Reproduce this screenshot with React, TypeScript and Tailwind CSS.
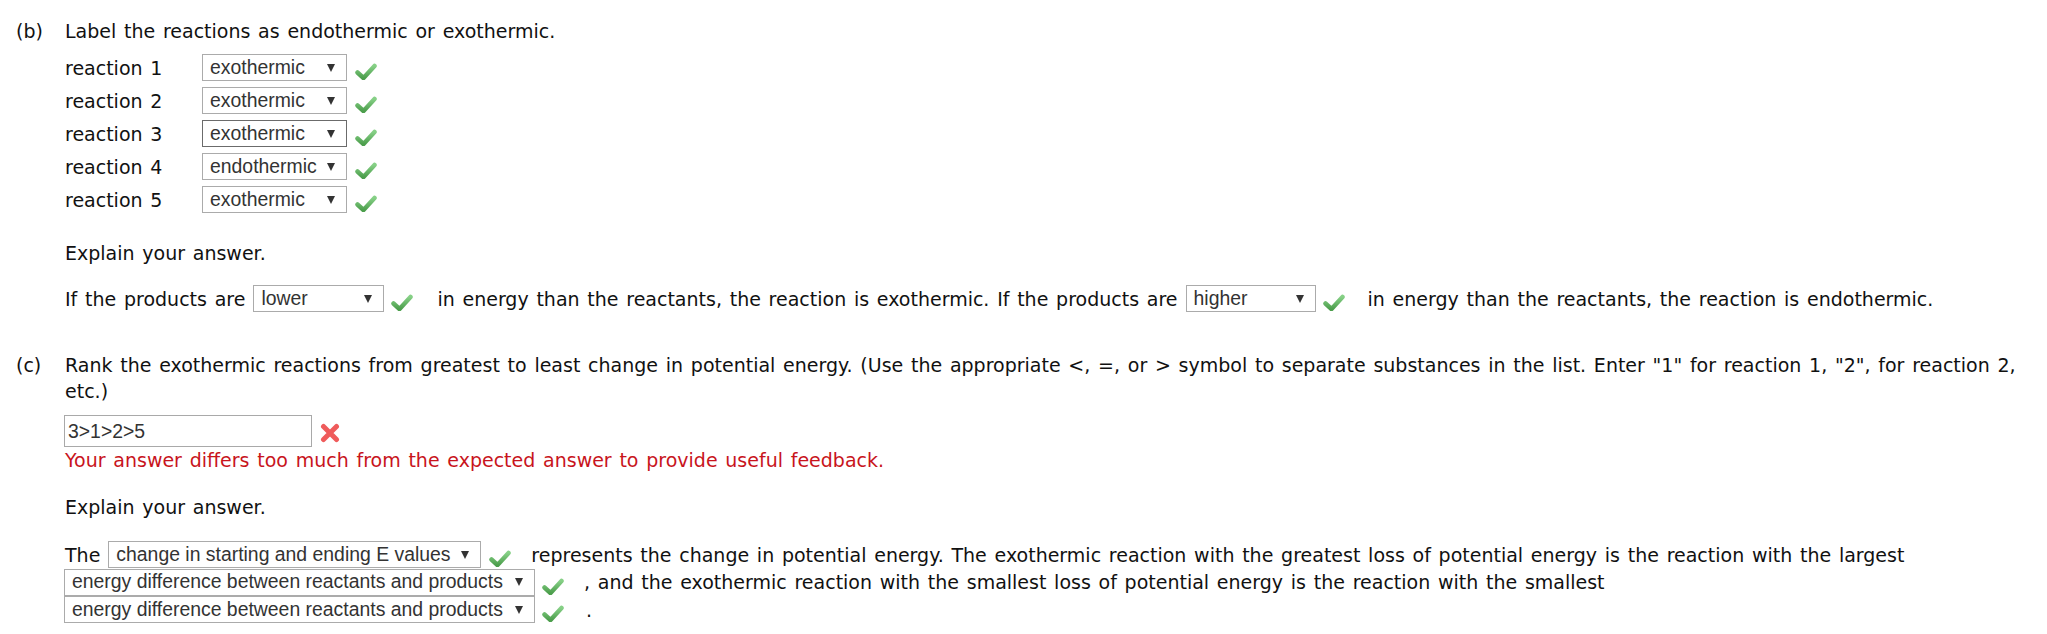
import React from 'react';

const font = "font-['DejaVu_Sans',Verdana,sans-serif]";

function Check() {
  return (
    <svg width="22" height="17" viewBox="0 0 22 17" className="shrink-0 mt-[8px]">
      <defs>
        <linearGradient id="chk" x1="0" y1="0" x2="0" y2="1">
          <stop offset="0" stopColor="#86d086" />
          <stop offset="1" stopColor="#4c9e4c" />
        </linearGradient>
      </defs>
      <path
        d="M2.5 9.5 L8.5 15 L19.5 3"
        fill="none"
        stroke="url(#chk)"
        strokeWidth="4.5"
        strokeLinecap="round"
        strokeLinejoin="round"
      />
    </svg>
  );
}

function Cross() {
  return (
    <svg width="20" height="20" viewBox="0 0 20 20" className="shrink-0 mt-[3px]">
      <path
        d="M3.5 3.5 L16.5 16.5 M16.5 3.5 L3.5 16.5"
        fill="none"
        stroke="#ef5b5b"
        strokeWidth="5"
        strokeLinecap="round"
      />
    </svg>
  );
}

function Select({ value, width, dark }: { value: string; width: number; dark?: boolean }) {
  return (
    <div
      className={`flex items-center justify-between shrink-0 h-[27px] pl-[7px] pr-[11px] bg-white border ${dark ? 'border-[#6b6b6b]' : 'border-[#ababab]'} font-['Liberation_Sans',Arial,sans-serif] text-[19.4px] text-[#333] leading-none [word-spacing:normal]`}
      style={{ width }}
    >
      <span className="whitespace-nowrap">{value}</span>
      <svg width="8" height="8" viewBox="0 0 8 8" className="shrink-0">
        <path d="M0 0 H8 L4 8 Z" fill="#333" />
      </svg>
    </div>
  );
}

const rows = [
  ['reaction 1', 'exothermic', false],
  ['reaction 2', 'exothermic', false],
  ['reaction 3', 'exothermic', true],
  ['reaction 4', 'endothermic', false],
  ['reaction 5', 'exothermic', false],
] as const;

export default function App() {
  return (
    <div className={`${font} text-[19px] leading-[26px] text-[#111] [word-spacing:1.7px] bg-white min-h-[634px] w-[2047px] px-[16px] pt-[18px]`}>
      {/* part (b) */}
      <div className="flex">
        <div className="w-[49px] shrink-0">(b)</div>
        <div className="flex flex-col">
          <div>Label the reactions as endothermic or exothermic.</div>

          <div className="flex flex-col gap-[6px] mt-[10px]">
            {rows.map(([label, value, dark]) => (
              <div key={label} className="flex items-center h-[27px]">
                <div className="w-[137px] shrink-0">{label}</div>
                <Select value={value} width={145} dark={dark} />
                <div className="ml-[8px]">
                  <Check />
                </div>
              </div>
            ))}
          </div>

          <div className="mt-[27px]">Explain your answer.</div>

          <div className="flex items-center h-[27px] mt-[19px] whitespace-nowrap">
            <span>If the products are</span>
            <div className="ml-[8px]">
              <Select value="lower" width={131} />
            </div>
            <div className="ml-[7px]">
              <Check />
            </div>
            <span className="ml-[24px]">in energy than the reactants, the reaction is exothermic. If the products are</span>
            <div className="ml-[8px]">
              <Select value="higher" width={130} />
            </div>
            <div className="ml-[7px]">
              <Check />
            </div>
            <span className="ml-[23px]">in energy than the reactants, the reaction is endothermic.</span>
          </div>
        </div>
      </div>

      {/* part (c) */}
      <div className="flex mt-[40px]">
        <div className="w-[49px] shrink-0">(c)</div>
        <div className="flex flex-col">
          <div className="whitespace-nowrap">
            Rank the exothermic reactions from greatest to least change in potential energy. (Use the appropriate &lt;, =, or &gt; symbol to separate substances in the list. Enter "1" for reaction 1, "2", for reaction 2,
          </div>
          <div>etc.)</div>

          <div className="flex items-center mt-[11px] -ml-px">
            <div className="w-[248px] h-[32px] border border-[#a9a9a9] bg-white flex items-center pl-[3px] font-['Liberation_Sans',Arial,sans-serif] text-[19.4px] text-[#333]">
              3&gt;1&gt;2&gt;5
            </div>
            <div className="ml-[8px]">
              <Cross />
            </div>
          </div>
          <div className="text-[#c8141c]">Your answer differs too much from the expected answer to provide useful feedback.</div>

          <div className="mt-[21px]">Explain your answer.</div>

          <div className="flex flex-col gap-[0.5px] mt-[21px] whitespace-nowrap">
            <div className="flex items-center h-[27px]">
              <span>The</span>
              <div className="ml-[8px]">
                <Select value="change in starting and ending E values" width={373} />
              </div>
              <div className="ml-[8px]">
                <Check />
              </div>
              <span className="ml-[20px]">
                represents the change in potential energy. The exothermic reaction with the greatest loss of potential energy is the reaction with the largest
              </span>
            </div>
            <div className="flex items-center h-[27px] -ml-px">
              <Select value="energy difference between reactants and products" width={471} />
              <div className="ml-[7px]">
                <Check />
              </div>
              <span className="ml-[20px]">
                , and the exothermic reaction with the smallest loss of potential energy is the reaction with the smallest
              </span>
            </div>
            <div className="flex items-center h-[27px] -ml-px">
              <Select value="energy difference between reactants and products" width={471} />
              <div className="ml-[7px]">
                <Check />
              </div>
              <span className="ml-[22px]">.</span>
            </div>
          </div>
        </div>
      </div>
    </div>
  );
}
